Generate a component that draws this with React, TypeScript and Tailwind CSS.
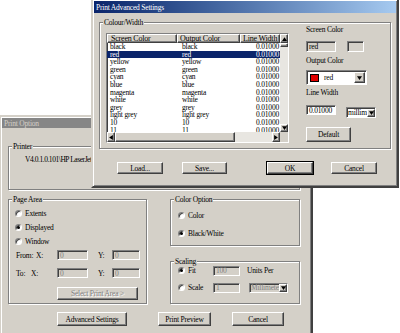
import type { ReactNode } from 'react';

const raised =
  'border border-t-white border-l-white border-r-[#404040] border-b-[#404040] shadow-[inset_-1px_-1px_0_#808080] bg-[#d4d0c8]';
const sunken =
  'border border-t-[#808080] border-l-[#808080] border-r-white border-b-white shadow-[inset_1px_1px_0_#404040]';
const dim = 'text-[#808080] [text-shadow:1px_1px_0_#fff]';

function Arrow({ dir }: { dir: 'up' | 'down' | 'left' | 'right' }) {
  const pts = {
    up: '0,3 2,0 4,3',
    down: '0,0 4,0 2,3',
    left: '3,0 3,4 0,2',
    right: '0,0 0,4 3,2',
  }[dir];
  const wide = dir === 'up' || dir === 'down';
  return (
    <svg width={wide ? 5 : 4} height={wide ? 4 : 5} viewBox={wide ? '0 0 4 3' : '0 0 3 4'}>
      <polygon points={pts} fill="#000" />
    </svg>
  );
}

function Group({ label, className, children }: { label: string; className: string; children?: ReactNode }) {
  return (
    <div className={`relative border border-[#808080] shadow-[inset_1px_1px_0_#fff,1px_1px_0_#fff] ${className}`}>
      <span className="absolute left-[3px] top-[-5px] bg-[#d4d0c8] px-[1px] leading-[9px]">{label}</span>
      {children}
    </div>
  );
}

function Btn({ children, className, def, disabled }: { children: ReactNode; className: string; def?: boolean; disabled?: boolean }) {
  return (
    <div
      className={`flex items-center justify-center ${raised} ${def ? 'outline outline-1 outline-black' : ''} ${disabled ? dim : ''} ${className}`}
    >
      {children}
    </div>
  );
}

function Radio({ checked, label, className }: { checked?: boolean; label: string; className?: string }) {
  return (
    <div className={`flex items-center ${className ?? ''}`}>
      <span className="flex items-center justify-center w-[7px] h-[7px] rounded-full bg-white border border-t-[#808080] border-l-[#808080] border-r-white border-b-white shadow-[inset_1px_1px_0_#404040]">
        {checked && <span className="w-[3px] h-[3px] rounded-full bg-black" />}
      </span>
      <span className="ml-[3px]">{label}</span>
    </div>
  );
}

function Field({ value, className, disabled }: { value: string; className: string; disabled?: boolean }) {
  return (
    <div className={`flex items-center pl-[2px] ${sunken} ${disabled ? 'bg-[#d4d0c8] text-[#808080]' : 'bg-white'} ${className}`}>
      {value}
    </div>
  );
}

const colours = ['black', 'red', 'yellow', 'green', 'cyan', 'blue', 'magenta', 'white', 'grey', 'light grey', '10', '11'];

function ColourList() {
  return (
    <div className={`mt-[10px] w-[183px] h-[110px] bg-white flex ${sunken}`}>
      <div className="w-[173px] flex flex-col">
        <div className="flex h-[9px] leading-[8px] whitespace-nowrap text-[8px]">
          <div className={`w-[70px] pl-[3px] overflow-hidden ${raised}`}>Screen Color</div>
          <div className={`w-[63px] pl-[2px] overflow-hidden ${raised}`}>Output Color</div>
          <div className={`w-[40px] pl-[2px] overflow-hidden ${raised}`}>Line Width</div>
        </div>
        <div className="h-[89px] overflow-hidden">
          {colours.map((c) => (
            <div
              key={c}
              className={`flex h-[7.6px] leading-[7.6px] whitespace-nowrap ${c === 'red' ? 'bg-[#0a246a] text-white' : ''}`}
            >
              <span className="w-[70px] pl-[3px]">{c}</span>
              <span className="w-[63px] pl-[5px]">{c}</span>
              <span className="w-[40px] pr-[1px] text-right">0.01000</span>
            </div>
          ))}
        </div>
        <div className="flex h-[10px] bg-[#e8e6e1]">
          <div className={`w-[8px] flex items-center justify-center ${raised}`}>
            <Arrow dir="left" />
          </div>
          <div className={`w-[120px] ${raised}`} />
          <div className="flex-1" />
          <div className={`w-[8px] flex items-center justify-center ${raised}`}>
            <Arrow dir="right" />
          </div>
        </div>
      </div>
      <div className="w-[8px] flex flex-col bg-[#e8e6e1]">
        <div className={`h-[9px] flex items-center justify-center ${raised}`}>
          <Arrow dir="up" />
        </div>
        <div className={`h-[4px] ${raised}`} />
        <div className="flex-1" />
        <div className={`h-[8px] flex items-center justify-center ${raised}`}>
          <Arrow dir="down" />
        </div>
        <div className="h-[10px] bg-[#d4d0c8]" />
      </div>
    </div>
  );
}

function AdvancedWindow() {
  return (
    <div className="absolute left-[91px] top-[-2px] w-[308px] h-[190px] bg-[#d4d0c8] border-2 border-t-[#d4d0c8] border-l-[#d4d0c8] border-r-[#404040] border-b-[#404040] shadow-[inset_1px_1px_0_#fff,inset_-1px_-1px_0_#808080] p-[1px]">
      <div className="h-[12px] pl-[2px] flex items-center text-white bg-gradient-to-r from-[#0a246a] to-[#a6caf0]">
        Print Advanced Settings
      </div>
      <Group label="Colour/Width" className="ml-[5px] mt-[9px] w-[292px] h-[127px]">
        <div className="flex pl-[6px]">
          <ColourList />
          <div className="ml-[17px] mt-[3px] flex flex-col">
            <div className="h-[8px] leading-[8px]">Screen Color</div>
            <div className="mt-[7px] flex">
              <Field value="red" className="w-[30px] h-[11px] !bg-[#d4d0c8] text-black" />
              <div className={`ml-[11px] w-[17px] h-[11px] ${sunken}`} />
            </div>
            <div className="mt-[5px] h-[8px] leading-[8px]">Output Color</div>
            <div className={`mt-[5px] w-[61px] h-[15px] bg-white flex items-center pl-[3px] pr-[1px] ${sunken}`}>
              <span className="w-[9px] h-[8px] bg-[#e00000] border border-black" />
              <span className="ml-[5px] flex-1">red</span>
              <div className={`w-[11px] h-[11px] flex items-center justify-center ${raised}`}>
                <Arrow dir="down" />
              </div>
            </div>
            <div className="mt-[4px] h-[8px] leading-[8px]">Line Width</div>
            <div className="mt-[8px] flex items-start">
              <Field value="0.01000" className="w-[30px] h-[10px]" />
              <div className={`ml-[10px] mt-[2px] w-[30px] h-[11px] bg-white flex items-center pl-[1px] ${sunken}`}>
                <span className="flex-1 overflow-hidden whitespace-nowrap">millim</span>
                <div className={`w-[8px] h-[8px] flex items-center justify-center ${raised}`}>
                  <Arrow dir="down" />
                </div>
              </div>
            </div>
            <Btn className="mt-[9px] w-[45px] h-[15px]">Default</Btn>
          </div>
        </div>
      </Group>
      <div className="mt-[13px] flex">
        <Btn className="ml-[23px] w-[46px] h-[12px]">Load...</Btn>
        <Btn className="ml-[19px] w-[45px] h-[12px]">Save...</Btn>
        <Btn def className="ml-[40px] w-[46px] h-[12px]">OK</Btn>
        <Btn className="ml-[18px] w-[46px] h-[12px]">Cancel</Btn>
      </div>
    </div>
  );
}

function PrintOptionWindow() {
  return (
    <div className="absolute left-[-1px] top-[115px] w-[314px] h-[240px] bg-[#d4d0c8] border-2 border-t-[#d4d0c8] border-l-[#d4d0c8] border-r-[#404040] border-b-[#404040] shadow-[inset_1px_1px_0_#fff,inset_-1px_-1px_0_#808080] p-[1px]">
      <div className="h-[10px] pl-[2px] flex items-center text-[#d4d0c8] bg-[#868686]">Print Option</div>
      <div className="pl-[6px]">
        <Group label="Printer" className="mt-[18px] w-[292px] h-[44px]">
          <div className="pl-[16px] pt-[8px] tracking-[-0.45px]">V4.0.1.0.101\HP LaserJet</div>
        </Group>
        <div className="mt-[9px] flex">
          <Group label="Page Area" className="w-[139px] h-[105px]">
            <div className="pl-[6px] pt-[6px] flex flex-col">
              <Radio label="Extents" className="h-[14px]" />
              <Radio label="Displayed" checked className="h-[14px]" />
              <Radio label="Window" className="h-[14px]" />
              <div className="mt-[2px] h-[10px] flex items-center pl-[1px]">
                <span className="w-[41px]">
                  From: <span className="ml-[1px]">X:</span>
                </span>
                <Field value="0" disabled className="w-[31px] h-[10px]" />
                <span className="ml-[10px] w-[14px]">Y:</span>
                <Field value="0" disabled className="w-[28px] h-[10px]" />
              </div>
              <div className="mt-[8px] h-[10px] flex items-center pl-[1px]">
                <span className="w-[41px]">
                  To: <span className="ml-[4px]">X:</span>
                </span>
                <Field value="0" disabled className="w-[31px] h-[10px]" />
                <span className="ml-[10px] w-[14px]">Y:</span>
                <Field value="0" disabled className="w-[28px] h-[10px]" />
              </div>
              <Btn disabled className="mt-[9px] ml-[42px] w-[81px] h-[13px]">
                Select Print Area &gt;
              </Btn>
            </div>
          </Group>
          <div className="ml-[23px] flex flex-col">
            <Group label="Color Option" className="w-[130px] h-[47px]">
              <div className="pl-[7px] pt-[8px] flex flex-col">
                <Radio label="Color" className="h-[14px]" />
                <Radio label="Black/White" checked className="mt-[4px] h-[14px]" />
              </div>
            </Group>
            <Group label="Scaling" className="mt-[15px] w-[130px] h-[43px]">
              <div className="pl-[7px] pt-[3px] flex flex-col">
                <div className="h-[11px] flex items-center">
                  <Radio label="Fit" checked className="w-[35px]" />
                  <Field value="100" disabled className="w-[27px] h-[10px]" />
                  <span className="ml-[7px] whitespace-nowrap">Units Per</span>
                </div>
                <div className="mt-[6px] h-[11px] flex items-center">
                  <Radio label="Scale" className="w-[35px]" />
                  <Field value="1" disabled className="w-[27px] h-[10px]" />
                  <div className={`ml-[9px] w-[39px] h-[10px] flex items-center pl-[1px] bg-[#d4d0c8] ${sunken}`}>
                    <span className="flex-1 overflow-hidden whitespace-nowrap text-[#808080]">Millimeters</span>
                    <div className={`w-[8px] h-[8px] flex items-center justify-center ${raised}`}>
                      <Arrow dir="down" />
                    </div>
                  </div>
                </div>
              </div>
            </Group>
          </div>
        </div>
        <div className="mt-[8px] flex">
          <Btn className="ml-[49px] w-[70px] h-[14px]">Advanced Settings</Btn>
          <Btn className="ml-[31px] w-[53px] h-[14px]">Print Preview</Btn>
          <Btn className="ml-[21px] w-[52px] h-[14px]">Cancel</Btn>
        </div>
      </div>
    </div>
  );
}

export default function App() {
  return (
    <div className="relative w-[400px] h-[333px] overflow-hidden bg-white text-black text-[7.5px] leading-[9px] tracking-[-0.2px] font-['Liberation_Serif','Times_New_Roman',serif]">
      <PrintOptionWindow />
      <AdvancedWindow />
    </div>
  );
}
